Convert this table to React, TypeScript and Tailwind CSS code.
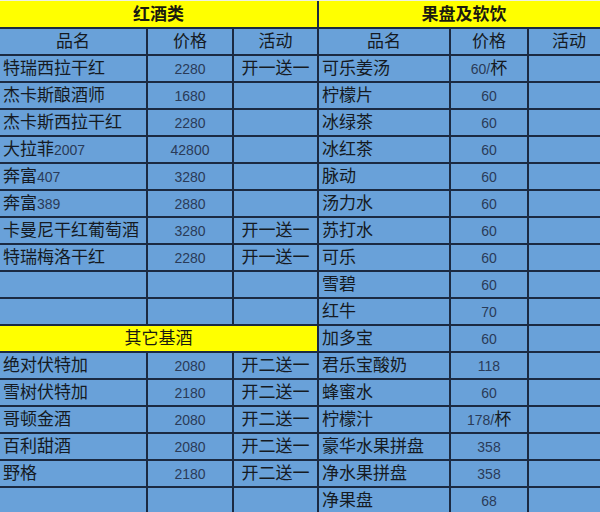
import React from "react";

type Row = [string, string, string];

const left: (Row | null)[] = [
  ["特瑞西拉干红", "2280", "开一送一"],
  ["杰卡斯酿酒师", "1680", ""],
  ["杰卡斯西拉干红", "2280", ""],
  ["大拉菲2007", "42800", ""],
  ["奔富407", "3280", ""],
  ["奔富389", "2880", ""],
  ["卡曼尼干红葡萄酒", "3280", "开一送一"],
  ["特瑞梅洛干红", "2280", "开一送一"],
  ["", "", ""],
  ["", "", ""],
  null,
  ["绝对伏特加", "2080", "开二送一"],
  ["雪树伏特加", "2180", "开二送一"],
  ["哥顿金酒", "2080", "开二送一"],
  ["百利甜酒", "2080", "开二送一"],
  ["野格", "2180", "开二送一"],
  ["", "", ""],
];

const right: Row[] = [
  ["可乐姜汤", "60/杯", ""],
  ["柠檬片", "60", ""],
  ["冰绿茶", "60", ""],
  ["冰红茶", "60", ""],
  ["脉动", "60", ""],
  ["汤力水", "60", ""],
  ["苏打水", "60", ""],
  ["可乐", "60", ""],
  ["雪碧", "60", ""],
  ["红牛", "70", ""],
  ["加多宝", "60", ""],
  ["君乐宝酸奶", "118", ""],
  ["蜂蜜水", "60", ""],
  ["柠檬汁", "178/杯", ""],
  ["豪华水果拼盘", "358", ""],
  ["净水果拼盘", "358", ""],
  ["净果盘", "68", ""],
];

const FONT = '"Liberation Sans", "Noto Sans CJK SC", sans-serif';

function Mixed({ text }: { text: string }) {
  const parts = text.match(/[\x00-\x7f]+|[^\x00-\x7f]+/g) || [];
  return (
    <>
      {parts.map((p, i) =>
        /^[\x00-\x7f]+$/.test(p) ? (
          <span key={i} className="text-[14px] text-[#2a3b58]">
            {p}
          </span>
        ) : (
          <span key={i} className="text-[17px] text-[#151a22]">
            {p}
          </span>
        )
      )}
    </>
  );
}

const cell = "h-[25px] bg-[#69a1d9] flex items-center overflow-hidden whitespace-nowrap leading-none";

function NameCell({ t }: { t: string }) {
  return (
    <div className={`${cell} pl-[3px]`}>
      <Mixed text={t} />
    </div>
  );
}
function PriceCell({ t }: { t: string }) {
  return (
    <div className={`${cell} justify-center`}>
      <Mixed text={t} />
    </div>
  );
}
function ActCell({ t }: { t: string }) {
  return (
    <div className={`${cell} justify-center text-[17px] text-[#151a22]`}>
      {t}
    </div>
  );
}
function HeadCell({ t }: { t: string }) {
  return (
    <div className={`${cell} justify-center text-[17px] text-[#151a22]`}>
      {t}
    </div>
  );
}

export default function App() {
  return (
    <div className="w-[600px] h-[512px] overflow-hidden bg-white" style={{ fontFamily: FONT }}>
      <div className="border-t border-[#eef0e0] w-[609px]">
        <div className="grid grid-cols-[146px_84px_83px_130px_76px_80px] gap-[2px] bg-[#1b2a42] w-[609px]">
          <div className="col-span-3 h-[26px] bg-[#ffff00] flex items-center justify-center text-[17px] font-semibold text-[#1a1a10] leading-none">
            红酒类
          </div>
          <div className="col-span-3 h-[26px] bg-[#ffff00] flex items-center justify-center text-[17px] font-bold text-[#1a1a10] leading-none">
            果盘及软饮
          </div>

          <HeadCell t="品名" />
          <HeadCell t="价格" />
          <HeadCell t="活动" />
          <HeadCell t="品名" />
          <HeadCell t="价格" />
          <HeadCell t="活动" />

          {left.map((l, i) => {
            const r = right[i];
            return (
              <React.Fragment key={i}>
                {l === null ? (
                  <div className="col-span-3 h-[25px] bg-[#ffff00] flex items-center justify-center text-[17px] text-[#1a1a10] leading-none">
                    其它基酒
                  </div>
                ) : (
                  <>
                    <NameCell t={l[0]} />
                    <PriceCell t={l[1]} />
                    <ActCell t={l[2]} />
                  </>
                )}
                <NameCell t={r[0]} />
                <PriceCell t={r[1]} />
                <ActCell t={r[2]} />
              </React.Fragment>
            );
          })}
        </div>
      </div>
    </div>
  );
}
